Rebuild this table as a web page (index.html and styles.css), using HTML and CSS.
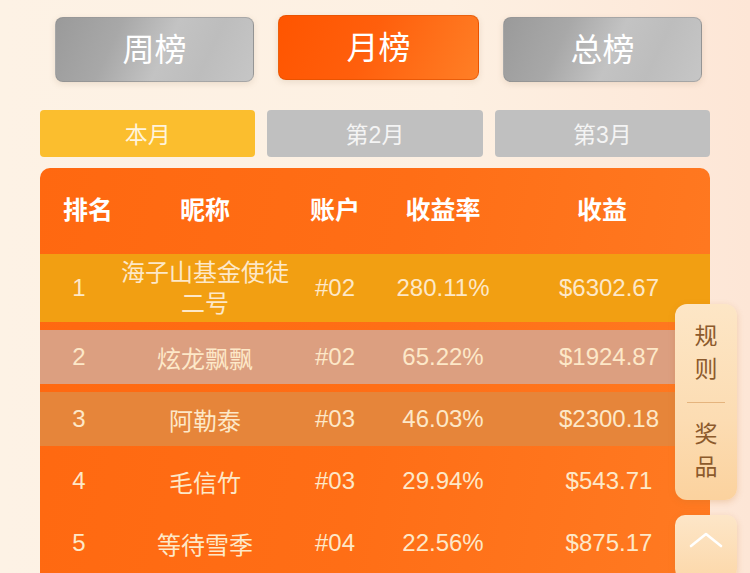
FILE: index.html
```html
<!DOCTYPE html>
<html lang="zh-CN">
<head>
<meta charset="utf-8">
<title>排行榜</title>
<link rel="stylesheet" href="styles.css">
</head>
<body>
<div class="page">
  <div class="boards">
    <div class="board">周榜</div>
    <div class="board active">月榜</div>
    <div class="board">总榜</div>
  </div>
  <div class="tabs">
    <div class="tab active">本月</div>
    <div class="tab">第2月</div>
    <div class="tab">第3月</div>
  </div>
  <div class="table">
    <div class="thead">
      <div class="c1 h">排名</div>
      <div class="c2 h">昵称</div>
      <div class="c3 h">账户</div>
      <div class="c4 h">收益率</div>
      <div class="c5 h hlast">收益</div>
    </div>
    <div class="row r1 tall">
      <div class="c1">1</div>
      <div class="c2 name">海子山基金使徒二号</div>
      <div class="c3">#02</div>
      <div class="c4">280.11%</div>
      <div class="c5">$6302.67</div>
    </div>
    <div class="row r2">
      <div class="c1">2</div>
      <div class="c2">炫龙飘飘</div>
      <div class="c3">#02</div>
      <div class="c4">65.22%</div>
      <div class="c5">$1924.87</div>
    </div>
    <div class="row r3">
      <div class="c1">3</div>
      <div class="c2">阿勒泰</div>
      <div class="c3">#03</div>
      <div class="c4">46.03%</div>
      <div class="c5">$2300.18</div>
    </div>
    <div class="row">
      <div class="c1">4</div>
      <div class="c2">毛信竹</div>
      <div class="c3">#03</div>
      <div class="c4">29.94%</div>
      <div class="c5">$543.71</div>
    </div>
    <div class="row">
      <div class="c1">5</div>
      <div class="c2">等待雪季</div>
      <div class="c3">#04</div>
      <div class="c4">22.56%</div>
      <div class="c5">$875.17</div>
    </div>
  </div>
</div>
<div class="side">
  <div class="side-item">规<br>则</div>
  <div class="side-line"></div>
  <div class="side-item">奖<br>品</div>
</div>
<div class="top-btn">
  <svg width="36" height="20" viewBox="0 0 36 20"><path d="M3 17 L18 5 L33 17" fill="none" stroke="#ffffff" stroke-width="2.6" stroke-linecap="round" stroke-linejoin="round"/></svg>
</div>
</body>
</html>
```
FILE: styles.css
```css
html, body {
  margin: 0;
  padding: 0;
  height: 100%;
  overflow: hidden;
}
body {
  font-family: "Liberation Sans", "Noto Sans CJK SC", sans-serif;
  background: linear-gradient(90deg, #fdf2e5 0%, #fdf0e2 60%, #fdeadb 85%, #fde6d6 100%);
}
.page {
  padding: 15px 40px 0 40px;
  width: 670px;
}
.boards {
  display: flex;
  gap: 24px;
  padding-left: 15px;
  align-items: flex-start;
}
.board {
  width: 199px;
  height: 65px;
  margin-top: 2px;
  border-radius: 8px;
  background: linear-gradient(115deg, #9a9a9a 0%, #a8a8a8 30%, #c3c3c3 55%, #bdbdbd 75%, #c6c6c6 100%);
  box-shadow: 0 2px 6px rgba(150, 120, 90, 0.18);
  color: #fff;
  font-size: 32px;
  display: flex;
  align-items: center;
  justify-content: center;
  box-sizing: border-box;
  border: 1px solid rgba(140,140,140,0.5);
  padding-bottom: 6px;
}
.board.active {
  width: 201px;
  margin-top: 0;
  background: linear-gradient(115deg, #ff5500 0%, #ff5f0c 45%, #ff7f26 100%);
  border-color: rgba(220, 80, 0, 0.6);
}
.tabs {
  display: flex;
  gap: 12px;
  margin-top: 28px;
}
.tab {
  flex: 1;
  height: 47px;
  border-radius: 4px;
  background: #c0c0c0;
  color: #f4f4f4;
  font-size: 23px;
  display: flex;
  align-items: center;
  justify-content: center;
  box-sizing: border-box;
  padding-bottom: 2px;
}
.tab.active {
  background: #fbbe2e;
  color: #fff4dc;
}
.table {
  margin-top: 11px;
  border-radius: 10px 10px 0 0;
  background: linear-gradient(100deg, #ff6810 0%, #ff6e16 50%, #ff7a22 100%);
  height: 420px;
}
.thead, .row {
  display: grid;
  grid-template-columns: 78px 174px 86px 130px 202px;
  align-items: center;
  text-align: center;
}
.thead {
  height: 86px;
  box-sizing: border-box;
  padding-bottom: 6px;
}
.h {
  color: #fff;
  font-weight: bold;
  font-size: 25px;
}
.thead .c1 { padding-left: 18px; }
.thead .hlast { padding-right: 14px; }
.row {
  height: 54px;
  margin-bottom: 8px;
  color: #fde8c8;
  font-size: 24px;
}
.row.tall { height: 68px; }
.r1 { background: #f29f12; }
.r2 { background: #dc9f80; }
.r3 { background: #e6853a; }
.name {
  line-height: 31px;
}
.side {
  position: absolute;
  left: 675px;
  top: 304px;
  width: 62px;
  height: 196px;
  border-radius: 12px;
  background: linear-gradient(180deg, #fde6c6 0%, #fcdcb2 60%, #fbd29e 100%);
  box-shadow: 0 2px 6px rgba(200, 120, 40, 0.25);
  display: flex;
  flex-direction: column;
  align-items: center;
  color: #8c5a2c;
  font-size: 23px;
  line-height: 33px;
  box-sizing: border-box;
  padding-top: 16px;
}
.side-line {
  width: 38px;
  height: 1px;
  background: #e5b47e;
  margin: 16px 0 15px;
}
.top-btn {
  position: absolute;
  left: 675px;
  top: 515px;
  width: 62px;
  height: 64px;
  border-radius: 10px;
  background: linear-gradient(180deg, #fde6c8 0%, #fcd8aa 100%);
  box-shadow: 0 2px 6px rgba(200, 120, 40, 0.25);
  display: flex;
  justify-content: center;
  padding-top: 14px;
  box-sizing: border-box;
}
```
